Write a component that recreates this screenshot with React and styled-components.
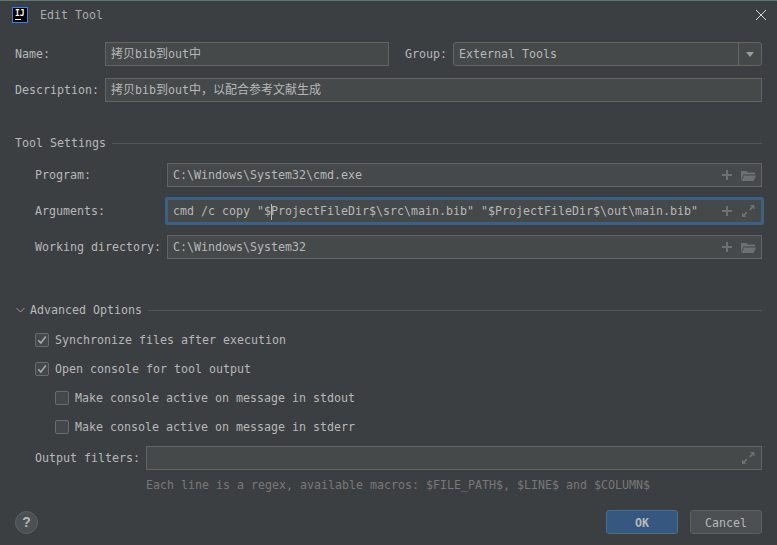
import React from 'react';
import styled, { createGlobalStyle, css } from 'styled-components';

const GlobalStyle = createGlobalStyle`
  html, body {
    margin: 0;
    padding: 0;
    background: #3c3f41;
  }
`;

const Dialog = styled.div`
  width: 777px;
  height: 545px;
  box-sizing: border-box;
  overflow: hidden;
  background: #3c3f41;
  border-top: 1px solid #5a7a70;
  color: #b6b8b9;
  font-family: "DejaVu Sans Mono", "Noto Sans CJK SC", monospace;
  font-size: 11.63px;
  line-height: 18px;
`;

const TitleBar = styled.div`
  height: 29px;
  box-sizing: border-box;
  display: flex;
  align-items: center;
  padding: 0 10px 2px 12px;
`;

const Logo = styled.div`
  width: 16px;
  height: 16px;
  box-sizing: border-box;
  border: 1px solid #2f86ee;
  background: #000;
  color: #fff;
  font: bold 8px/9px "DejaVu Sans Mono", monospace;
  letter-spacing: 0;
  padding: 1px 0 0 2px;
  position: relative;
  &::after {
    content: '';
    position: absolute;
    left: 2px;
    bottom: 2px;
    width: 6px;
    height: 1px;
    background: #fff;
  }
`;

const Title = styled.div`
  margin-left: 12px;
  flex: 1;
  color: #a9abac;
`;

const Body = styled.div`
  padding: 12px 15px 0;
`;

const Row = styled.div`
  display: flex;
  align-items: center;
  height: 24px;
  margin-top: ${p => p.$top ?? 12}px;
  padding-left: ${p => p.$indent ?? 0}px;
`;

const Label = styled.div`
  width: ${p => p.$width}px;
  flex: none;
  white-space: pre;
  margin-left: ${p => p.$left ?? 0}px;
`;

const Field = styled.div`
  flex: ${p => p.$width ? 'none' : 1};
  width: ${p => p.$width ? `${p.$width}px` : 'auto'};
  height: 24px;
  box-sizing: border-box;
  display: flex;
  align-items: center;
  padding: 0 5px;
  background: #45494a;
  border: 1px solid #646464;
  white-space: pre;
  ${p => p.$focused && css`
    border-color: #3d6185;
    box-shadow: 0 0 0 2px #3d6185;
    border-radius: 1px;
  `}
`;

const FieldText = styled.div`
  flex: 1;
`;

/* the font mix gives CJK glyphs a hair too narrow at the mono size */
const Cjk = styled.span`
  font-size: 12px;
`;

const Caret = styled.span`
  display: inline-block;
  width: 0;
  height: 16px;
  margin-right: -1px;
  vertical-align: middle;
  border-left: 1px solid #bbbbbb;
`;

const FieldIcons = styled.div`
  display: flex;
  align-items: center;
  gap: 9px;
  color: #6e7173;
`;

const Combo = styled(Field)`
  border-radius: 3px;
  padding: 0;
`;

const ComboText = styled.div`
  flex: 1;
  padding-left: 5px;
`;

const ComboArrow = styled.div`
  width: 22px;
  height: 22px;
  display: flex;
  align-items: center;
  justify-content: center;
  border-left: 1px solid #646464;
  &::after {
    content: '';
    border-left: 4px solid transparent;
    border-right: 4px solid transparent;
    border-top: 5px solid #9a9d9e;
  }
`;

const SectionHeading = styled.div`
  display: flex;
  align-items: center;
  height: 18px;
  margin-top: ${p => p.$top}px;
  &::after {
    content: '';
    flex: 1;
    height: 1px;
    margin-left: 6px;
    background: #515658;
  }
`;

const Chevron = styled.svg`
  width: 9px;
  height: 6px;
  margin: 0 5px 0 1px;
  color: #9a9d9e;
`;

const CheckRows = styled.div`
  margin-top: 6px;
`;

const CheckRow = styled.div`
  display: flex;
  align-items: center;
  gap: 6px;
  height: 29px;
  padding-left: ${p => p.$indent}px;
`;

const CheckBox = styled.div`
  width: 14px;
  height: 14px;
  box-sizing: border-box;
  display: flex;
  align-items: center;
  justify-content: center;
  background: #43494a;
  border: 1px solid #6b6b6b;
  border-radius: 2px;
  color: #a7a7a7;
`;

const Hint = styled.div`
  margin: 6px 0 0 131px;
  color: #787878;
`;

const Footer = styled.div`
  display: flex;
  align-items: center;
  gap: 12px;
  margin-top: 16px;
`;

const HelpButton = styled.div`
  width: 23px;
  height: 23px;
  box-sizing: border-box;
  border-radius: 50%;
  margin-right: auto;
  display: flex;
  align-items: center;
  justify-content: center;
  background: #4c5052;
  border: 1px solid #5e6060;
  font: bold 14px "Liberation Sans", sans-serif;
`;

const Button = styled.div`
  width: 72px;
  height: 24px;
  box-sizing: border-box;
  padding-top: 2px;
  display: flex;
  align-items: center;
  justify-content: center;
  border-radius: 3px;
  background: ${p => p.$primary ? '#365880' : '#4c5052'};
  border: 1px solid ${p => p.$primary ? '#4c708c' : '#5e6060'};
  font-weight: ${p => p.$primary ? 'bold' : 'normal'};
`;

const CloseIcon = () => (
  <svg width="12" height="12" viewBox="0 0 12 12" fill="none" stroke="#d5d6d6" strokeWidth="1">
    <path d="M1 1l10 10M11 1L1 11" />
  </svg>
);

const PlusIcon = () => (
  <svg width="10" height="10" viewBox="0 0 10 10" fill="none" stroke="currentColor" strokeWidth="2">
    <path d="M5 0v10M0 5h10" />
  </svg>
);

const FolderIcon = () => (
  <svg width="15" height="11" viewBox="0 0 15 11" fill="currentColor">
    <path d="M0 1v9.5l2.4-6H14V2.5H6.8L5.3 1z" />
    <path d="M3 5.5L.7 11h11.8L15 5.5z" />
  </svg>
);

const ExpandIcon = () => (
  <svg width="15" height="12" viewBox="0 0 15 12" fill="currentColor">
    <path d="M9 0h4.5v4.5l-1.6-1.6-2.6 2.6-1.2-1.2 2.6-2.6z" />
    <path d="M1 7.5V12h4.5l-1.6-1.6 2.6-2.6-1.2-1.2-2.6 2.6z" />
  </svg>
);

const CheckMark = () => (
  <svg width="10" height="10" viewBox="0 0 10 10" fill="none" stroke="currentColor" strokeWidth="1.6">
    <path d="M1.2 5.2l2.6 2.8 5-6.6" />
  </svg>
);

function PathIcons({ expand }) {
  return (
    <FieldIcons>
      <PlusIcon />
      {expand ? <ExpandIcon /> : <FolderIcon />}
    </FieldIcons>
  );
}

function Check({ checked, indent, children }) {
  return (
    <CheckRow $indent={indent}>
      <CheckBox>{checked && <CheckMark />}</CheckBox>
      {children}
    </CheckRow>
  );
}

export default function App() {
  return (
    <Dialog>
      <GlobalStyle />
      <TitleBar>
        <Logo>IJ</Logo>
        <Title>Edit Tool</Title>
        <CloseIcon />
      </TitleBar>
      <Body>
        <Row $top={0}>
          <Label $width={90}>Name:</Label>
          <Field $width={284}>
            <div><Cjk>拷贝</Cjk>bib<Cjk>到</Cjk>out<Cjk>中</Cjk></div>
          </Field>
          <Label $width={48} $left={16}>Group:</Label>
          <Combo>
            <ComboText>External Tools</ComboText>
            <ComboArrow />
          </Combo>
        </Row>
        <Row>
          <Label $width={90}>Description:</Label>
          <Field>
            <div><Cjk>拷贝</Cjk>bib<Cjk>到</Cjk>out<Cjk>中，以配合参考文献生成</Cjk></div>
          </Field>
        </Row>

        <SectionHeading $top={32}>Tool Settings</SectionHeading>
        <Row $top={11} $indent={20}>
          <Label $width={132}>Program:</Label>
          <Field>
            <FieldText>C:\Windows\System32\cmd.exe</FieldText>
            <PathIcons />
          </Field>
        </Row>
        <Row $indent={20}>
          <Label $width={132}>Arguments:</Label>
          <Field $focused>
            <FieldText>
              cmd /c copy "$<Caret />ProjectFileDir$\src\main.bib" "$ProjectFileDir$\out\main.bib"
            </FieldText>
            <PathIcons expand />
          </Field>
        </Row>
        <Row $indent={20}>
          <Label $width={132}>Working directory:</Label>
          <Field>
            <FieldText>C:\Windows\System32</FieldText>
            <PathIcons />
          </Field>
        </Row>

        <SectionHeading $top={42}>
          <Chevron viewBox="0 0 9 6" fill="none" stroke="currentColor" strokeWidth="1">
            <path d="M.5 1l4 4 4-4" />
          </Chevron>
          Advanced Options
        </SectionHeading>
        <CheckRows>
          <Check checked indent={20}>Synchronize files after execution</Check>
          <Check checked indent={20}>Open console for tool output</Check>
          <Check indent={40}>Make console active on message in stdout</Check>
          <Check indent={40}>Make console active on message in stderr</Check>
        </CheckRows>
        <Row $top={5} $indent={20}>
          <Label $width={111}>Output filters:</Label>
          <Field>
            <FieldText />
            <FieldIcons><ExpandIcon /></FieldIcons>
          </Field>
        </Row>
        <Hint>Each line is a regex, available macros: $FILE_PATH$, $LINE$ and $COLUMN$</Hint>

        <Footer>
          <HelpButton>?</HelpButton>
          <Button $primary>OK</Button>
          <Button>Cancel</Button>
        </Footer>
      </Body>
    </Dialog>
  );
}
